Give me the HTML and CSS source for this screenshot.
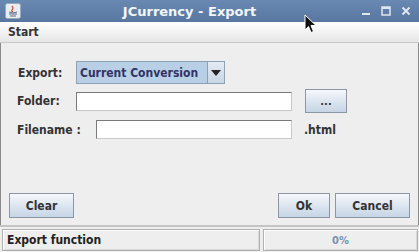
FILE: index.html
```html
<!DOCTYPE html>
<html lang="en">
<head>
    <meta charset="UTF-8">
    <title>JCurrency - Export</title>
    <link rel="stylesheet" href="styles.css">
</head>
<body>
    <div class="window">
        <div class="titlebar">
            <svg class="app-icon" width="16" height="16" viewBox="0 0 16 16">
                <rect x="0.5" y="0.5" width="15" height="15" rx="2" fill="#e9edf2" stroke="#9aa9bb"/>
                <path d="M4 11 h8 M5 13 h6" stroke="#5a6f8a" stroke-width="1"/>
                <path d="M7 3 q2 2 0 4 q-1 1 1 2" stroke="#d2552a" stroke-width="1.2" fill="none"/>
                <path d="M4 9 q4 2 8 0" stroke="#5a6f8a" stroke-width="1" fill="none"/>
            </svg>
            <div class="title">JCurrency - Export</div>
            <div class="win-btns">
                <svg width="10" height="10" viewBox="0 0 10 10"><rect x="1" y="7" width="8" height="2" fill="#dfe6ef"/></svg>
                <svg width="10" height="10" viewBox="0 0 10 10"><rect x="1" y="1" width="8" height="8" fill="none" stroke="#dfe6ef" stroke-width="1.5"/><rect x="1" y="1" width="8" height="2" fill="#dfe6ef"/></svg>
                <svg width="10" height="10" viewBox="0 0 10 10"><path d="M1.5 1.5 L8.5 8.5 M8.5 1.5 L1.5 8.5" stroke="#dfe6ef" stroke-width="2"/></svg>
            </div>
        </div>

        <div class="menubar">
            <span class="menu">Start</span>
        </div>

        <div class="content">
            <div class="form">
                <div class="row row-export">
                    <label class="lbl">Export:</label>
                    <div class="combo">
                        <div class="combo-value">Current Conversion</div>
                        <div class="combo-arrow">
                            <svg width="10" height="6" viewBox="0 0 10 6"><path d="M0 0 H10 L5 6 Z" fill="#222"/></svg>
                        </div>
                    </div>
                </div>
                <div class="row row-folder">
                    <label class="lbl">Folder:</label>
                    <div class="field field-folder"></div>
                    <button class="btn btn-dots">...</button>
                </div>
                <div class="row row-file">
                    <label class="lbl">Filename :</label>
                    <div class="field field-file"></div>
                    <span class="ext">.html</span>
                </div>
            </div>

            <div class="actions">
                <button class="btn btn-clear">Clear</button>
                <div class="spacer"></div>
                <button class="btn btn-ok">Ok</button>
                <button class="btn btn-cancel">Cancel</button>
            </div>
        </div>

        <div class="statusbar">
            <div class="status-msg">Export function</div>
            <div class="status-progress">0%</div>
        </div>

        <svg class="cursor" width="13" height="20" viewBox="0 0 13 20">
            <path d="M1 1 L1 16 L4.5 12.5 L7 18.5 L9.5 17.5 L7 11.5 L12 11.5 Z" fill="#111" stroke="#fff" stroke-width="1"/>
        </svg>
    </div>
</body>
</html>
```

FILE: styles.css
```css
html, body {
    margin: 0;
    padding: 0;
}
body {
    width: 419px;
    height: 252px;
    overflow: hidden;
    font-family: "DejaVu Sans Condensed", "DejaVu Sans", Verdana, sans-serif;
    font-stretch: condensed;
    font-size: 12px;
    font-weight: bold;
    color: #333;
    background: #eeeeee;
}
.window {
    position: relative;
    width: 419px;
    height: 252px;
    display: flex;
    flex-direction: column;
    background: #eeeeee;
}
.titlebar {
    height: 22px;
    flex: none;
    display: flex;
    align-items: center;
    padding: 0 8px 0 5px;
    background: linear-gradient(#6989b2, #5777a1);
    color: #f4f6fa;
    font-family: "DejaVu Sans", Verdana, sans-serif;
    font-stretch: normal;
}
.app-icon {
    flex: none;
}
.title {
    flex: 1;
    text-align: center;
    font-size: 13px;
    padding-right: 3px;
}
.win-btns {
    display: flex;
    gap: 10px;
}
.menubar {
    height: 20px;
    flex: none;
    display: flex;
    align-items: center;
    padding-left: 8px;
    background: linear-gradient(#ffffff, #e6e6e6);
    border-bottom: 1px solid #c8c8c8;
}
.menu {
    font-size: 12px;
    color: #333;
}
.content {
    flex: 1;
    display: flex;
    flex-direction: column;
    padding: 0 8px 7px 8px;
    border-left: 1px solid #8a8a8a;
    border-right: 1px solid #8a8a8a;
}
.form {
    flex: 1;
    padding-top: 18px;
}
.row {
    display: flex;
    align-items: center;
}
.lbl {
    width: 67px;
    padding-left: 8px;
    box-sizing: border-box;
    flex: none;
    white-space: nowrap;
    color: #333;
}
.row-export {
    height: 23px;
}
.row-export .lbl {
    padding-left: 9px;
}
.combo {
    display: flex;
    height: 23px;
    border: 1px solid #8da1b6;
    box-sizing: border-box;
}
.combo-value {
    width: 130px;
    padding-left: 3px;
    box-sizing: border-box;
    display: flex;
    align-items: center;
    white-space: nowrap;
    background: #b8cfe5;
    color: #333366;
    font-size: 12px;
}
.combo-arrow {
    width: 16px;
    display: flex;
    align-items: center;
    justify-content: center;
    border-left: 1px solid #8da1b6;
    background: linear-gradient(#e4ebf3, #c8d6e4);
}
.row-folder {
    margin-top: 5px;
    height: 24px;
}
.field {
    height: 19px;
    box-sizing: border-box;
    background: #fff;
    border: 1px solid #7a7a7a;
    border-right-color: #c9c9c9;
    border-bottom-color: #c9c9c9;
}
.field-folder {
    width: 216px;
}
.field-file {
    width: 196px;
    margin-left: 20px;
}
.btn {
    font-family: "DejaVu Sans Condensed", "DejaVu Sans", Verdana, sans-serif;
    font-stretch: condensed;
    font-weight: bold;
    font-size: 12px;
    color: #333;
    border: 1px solid #8b97a6;
    border-radius: 0;
    background: linear-gradient(#f6f8fb, #d8e2ee 60%, #c7d5e4);
    padding: 0;
    box-sizing: border-box;
}
.btn-dots {
    width: 42px;
    height: 24px;
    margin-left: 13px;
    font-size: 11px;
}
.row-file {
    margin-top: 7px;
    height: 19px;
}
.ext {
    margin-left: 12px;
    color: #333;
}
.actions {
    display: flex;
    height: 25px;
    flex: none;
}
.spacer {
    flex: 1;
}
.btn-clear {
    width: 65px;
}
.btn-ok {
    width: 52px;
}
.btn-cancel {
    width: 75px;
    margin-left: 5px;
}
.statusbar {
    height: 27px;
    flex: none;
    display: flex;
    gap: 3px;
    padding: 0 1px 1px 2px;
    box-sizing: border-box;
    border-top: 2px solid #c4c4c4;
    background: #eeeeee;
}
.status-msg,
.status-progress {
    display: flex;
    align-items: center;
    border: 1px solid #b0b0b0;
    box-shadow: inset 1px 1px 0 #fff, inset -1px -1px 0 #d8d8d8;
    margin-top: 2px;
}
.status-msg {
    width: 258px;
    padding-left: 4px;
    box-sizing: border-box;
    color: #222;
}
.status-progress {
    flex: 1;
    justify-content: center;
    color: #7d90aa;
    font-size: 11px;
}
.cursor {
    position: absolute;
    left: 304px;
    top: 14px;
}
```
